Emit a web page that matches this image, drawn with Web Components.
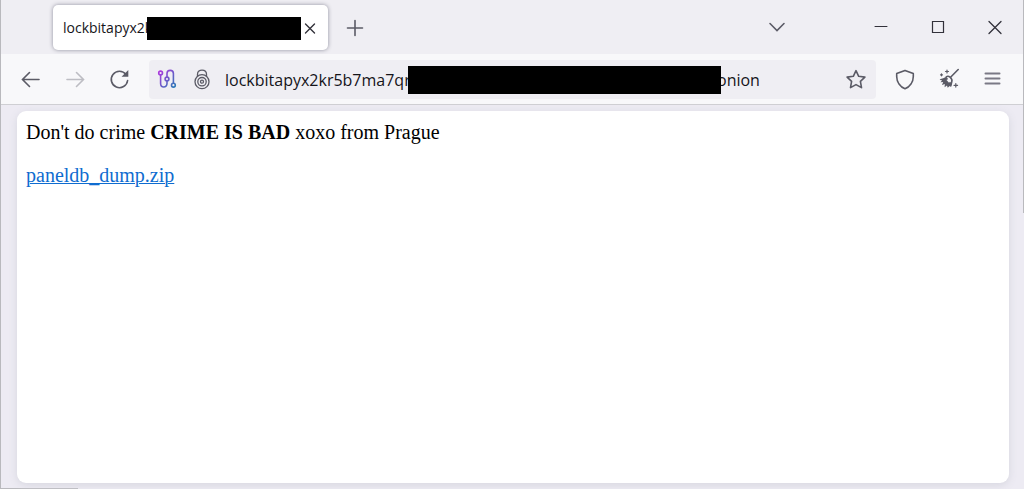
<!DOCTYPE html>
<html lang="en">
<head>
<meta charset="utf-8">
<title>Onion site in a browser window</title>
<style>
html, body { margin: 0; height: 100%; }
body { font-family: "Open Sans", "Noto Sans", sans-serif; color: #15141a; }
</style>
</head>
<body>
<browser-window>
  <tab-strip slot="tabs">
    <browser-tab>lockbitapyx2k</browser-tab>
  </tab-strip>
  <nav-bar slot="toolbar">
    <address-bar start="lockbitapyx2kr5b7ma7qr" end="onion"></address-bar>
  </nav-bar>
  <page-view>
    <p>Don't do crime <b>CRIME IS BAD</b> xoxo from Prague</p>
    <p><file-link href="#paneldb_dump.zip">paneldb_dump.zip</file-link></p>
  </page-view>
</browser-window>
<script>
const icons = {
  back: '<path d="M17 9.500H.5M7.500 2.500l-7 7 7 7"/>',
  forward: '<path d="M1 9.500h16.500M10.500 2.500l7 7-7 7"/>',
  reload: '<path d="M16 4.500A8.200 8.200 0 1 0 17.600 10.500"/><path d="M18.300 0v6.700h-6.700z" fill="currentColor" stroke="none"/>',
  plus: '<path d="M9 2.500v15M1.500 10h15"/>',
  close: '<path d="M4.500 5l9 9M13.500 5l-9 9"/>',
  chevron: '<path d="M2 5.500l7 7 7-7"/>',
  min: '<path d="M3 8.500h12"/>',
  max: '<path d="M3.500 3.500h11v11h-11z"/>',
  exit: '<path d="M3 3.500l12 12M15 3.500L3 15.500"/>',
  star: '<path d="M9 .6l2.700 5.700 6.200.8-4.500 4.300 1.100 6.200L9 14.600l-5.500 3L4.600 11.400.1 7.100l6.200-.8z" stroke-linejoin="round"/>',
  shield: '<path d="M9 .4L17.300 3.600v3C17.300 12 13.800 16.800 9 18.800 4.200 16.800.7 12 .7 6.600v-3z" stroke-linejoin="round"/>',
  broom: '<path d="M18.200-.5L10.800 7"/><path d="M6.300 6.800C8.600 5 12.800 8.500 11.800 11.600l-1 4.200"/><path d="M6.300 6.800C4.500 8 2 8.800-.4 9.300c1 .9 1.700 1.100 2.400 1.200l-1.500 1.700 2.700-.1-1.200 3 2.800-1-.2 3.100 2.400-1.800.7 2.400 2-1.700.9.700 1-3.300z" fill="currentColor" stroke="none"/><path d="M8.800 8.800l2 2.200-1.800 1.700-2.500-2.600z" fill="#f8f8fa" stroke="none"/><path d="M7 0v3M5.500 1.500h3M15.800 13.500v3.600M14 15.300h3.600M1.500 3.800v2M.5 4.800h2" stroke-width="1.200"/>',
  menu: '<path d="M1.500 3.500h14M1.500 8.500h14M1.500 13.500h14" stroke="#7a7985"/>',
  circuit: '<defs><linearGradient id="g" x1="0" y1="0" x2="18" y2="18" gradientUnits="userSpaceOnUse"><stop offset="0" stop-color="#b833e1"/><stop offset=".5" stop-color="#7059ca"/><stop offset="1" stop-color="#247fb5"/></linearGradient></defs><g stroke="url(#g)" stroke-width="1.600"><circle cx="2.600" cy="3" r="1.900"/><circle cx="15.400" cy="15.200" r="1.900"/><circle cx="9" cy="9" r="1.900"/><path d="M2.600 5v8.500c0 4.600 6.400 4.600 6.400 0V11M9 7V3.500c0-4.200 6.400-4.200 6.400 0V13"/></g>',
  onion: '<path d="M4.500 6V4.300C4.500-1.400 13.500-1.400 13.500 4.300V6"/><circle cx="9" cy="11.700" r="7"/><circle cx="9" cy="11.700" r="4.200"/><circle cx="9" cy="11.700" r="1.500"/>'
};

class UiIcon extends HTMLElement {
  connectedCallback() {
    const w = this.getAttribute('weight') || '1.6';
    this.attachShadow({ mode: 'open' }).innerHTML = `
      <style>:host{display:block;width:18px;height:18px}svg{display:block;overflow:visible}</style>
      <svg width="18" height="18" viewBox="0 0 18 18" fill="none" stroke="currentColor" stroke-width="${w}" stroke-linecap="round" aria-hidden="true">${icons[this.getAttribute('name')]}</svg>`;
  }
}
customElements.define('ui-icon', UiIcon);

class IconButton extends HTMLElement {
  connectedCallback() {
    const off = this.hasAttribute('disabled') ? 'disabled' : '';
    this.attachShadow({ mode: 'open' }).innerHTML = `
      <style>
        :host{display:block;flex:none;color:#5b5b66}
        button{display:grid;place-items:center;width:100%;height:100%;padding:0;border:0;background:none;color:inherit}
        button:disabled{color:#bdbdc3}
      </style>
      <button type="button" aria-label="${this.getAttribute('label')}" ${off}><ui-icon name="${this.getAttribute('icon')}" weight="${this.getAttribute('weight') || '1.6'}"></ui-icon></button>`;
  }
}
customElements.define('icon-button', IconButton);

class RedactionBar extends HTMLElement {
  connectedCallback() {
    this.attachShadow({ mode: 'open' }).innerHTML = '<style>:host{display:block;flex:none;background:#000;position:relative}</style>';
  }
}
customElements.define('redaction-bar', RedactionBar);

class BrowserTab extends HTMLElement {
  connectedCallback() {
    this.attachShadow({ mode: 'open' }).innerHTML = `
      <style>
        :host{display:flex;align-items:center;box-sizing:border-box;width:275px;height:45px;padding:2px 0 0 10px;border-radius:5px;background:#fff;box-shadow:0 0 4px #8f8f9d;font-size:14px;line-height:20px}
        .title{width:84px;overflow:hidden;white-space:nowrap}
        redaction-bar{width:154px;height:23px}
        icon-button{width:14px;height:24px;color:#32313a}
      </style>
      <span class="title"><slot></slot></span><redaction-bar></redaction-bar>
      <icon-button icon="close" label="Close tab" weight="1.4"></icon-button>`;
  }
}
customElements.define('browser-tab', BrowserTab);

class TabStrip extends HTMLElement {
  connectedCallback() {
    this.attachShadow({ mode: 'open' }).innerHTML = `
      <style>
        :host{display:flex;align-items:center;height:54px;padding:0 1px 0 52px;background:#efeef3}
        .gap{flex:1}
        icon-button{width:57px;height:36px;color:#32313a}
        .new{width:54px;color:#5b5b66}
        .list{width:48px;margin-right:51px;color:#5b5b66}
      </style>
      <slot></slot>
      <icon-button class="new" icon="plus" label="New tab"></icon-button>
      <span class="gap"></span>
      <icon-button class="list" icon="chevron" label="List all tabs"></icon-button>
      <icon-button icon="min" label="Minimize" weight="1"></icon-button>
      <icon-button icon="max" label="Maximize" weight="1.200"></icon-button>
      <icon-button icon="exit" label="Close window" weight="1.300"></icon-button>`;
  }
}
customElements.define('tab-strip', TabStrip);

class AddressBar extends HTMLElement {
  connectedCallback() {
    this.attachShadow({ mode: 'open' }).innerHTML = `
      <style>
        :host{display:flex;align-items:center;flex:1;min-width:0;height:39px;border-radius:4px;background:#efeef3;font-size:16px;line-height:24px}
        icon-button{width:36px;height:36px}
        icon-button + icon-button{width:34px}
        input{box-sizing:border-box;width:183px;margin-left:6px;height:26px;padding:2px 0 0;border:0;background:none;font:inherit;color:inherit;flex:none}
        redaction-bar{width:313px;height:28px;margin-top:1px}
        .end{margin-left:-4px;padding-top:2px}
        .gap{flex:1}
        .star{width:40px}
      </style>
      <icon-button icon="circuit" label="Tor circuit"></icon-button>
      <icon-button icon="onion" label="Site information" weight="1.300"></icon-button>
      <input type="text" aria-label="Address" value="${this.getAttribute('start')}">
      <redaction-bar></redaction-bar>
      <span class="end">${this.getAttribute('end')}</span>
      <span class="gap"></span>
      <icon-button class="star" icon="star" label="Bookmark this page"></icon-button>`;
  }
}
customElements.define('address-bar', AddressBar);

class NavBar extends HTMLElement {
  connectedCallback() {
    this.attachShadow({ mode: 'open' }).innerHTML = `
      <style>
        :host{display:flex;align-items:center;height:50px;padding:0 9px 0 8px;background:#f8f8fa;border-bottom:1px solid #cfcfd3}
        icon-button{width:44px;height:36px}
        slot{display:flex;flex:1;margin:0 7px 0 8px;min-width:0}
      </style>
      <icon-button icon="back" label="Back"></icon-button>
      <icon-button icon="forward" label="Forward" disabled></icon-button>
      <icon-button icon="reload" label="Reload"></icon-button>
      <slot></slot>
      <icon-button icon="shield" label="Security level"></icon-button>
      <icon-button icon="broom" label="New identity"></icon-button>
      <icon-button icon="menu" label="Open menu" weight="2"></icon-button>`;
  }
}
customElements.define('nav-bar', NavBar);

class PageView extends HTMLElement {
  connectedCallback() {
    this.attachShadow({ mode: 'open' }).innerHTML = `
      <style>
        :host{display:block;flex:1;margin:6px 15px 6px 16px;padding:10px 9px;border-radius:9px;background:#fff;box-shadow:0 2px 8px #d6d6df;font:20px/23px "Liberation Serif",serif;color:#000}
        ::slotted(p){margin:0 0 20px}
      </style><slot></slot>`;
  }
}
customElements.define('page-view', PageView);

class FileLink extends HTMLElement {
  connectedCallback() {
    this.attachShadow({ mode: 'open' }).innerHTML = `
      <style>:host{display:inline}a{color:#0f6cd0;text-decoration-thickness:1px}</style><a href="${this.getAttribute('href')}"><slot></slot></a>`;
  }
}
customElements.define('file-link', FileLink);

class BrowserWindow extends HTMLElement {
  connectedCallback() {
    this.attachShadow({ mode: 'open' }).innerHTML = `
      <style>
        :host{display:flex;flex-direction:column;box-sizing:border-box;min-height:100vh;border-left:1px solid #b9b9bd;background:linear-gradient(#b9b9bd,#b9b9bd) 0 100%/77px 1px no-repeat,#edebf3;position:relative}
        :host::after{content:"";position:absolute;top:0;right:0;width:1px;height:213px;background:#b9b9bd}
      </style>
      <slot name="tabs"></slot><slot name="toolbar"></slot><slot></slot>`;
  }
}
customElements.define('browser-window', BrowserWindow);
</script>
</body>
</html>
